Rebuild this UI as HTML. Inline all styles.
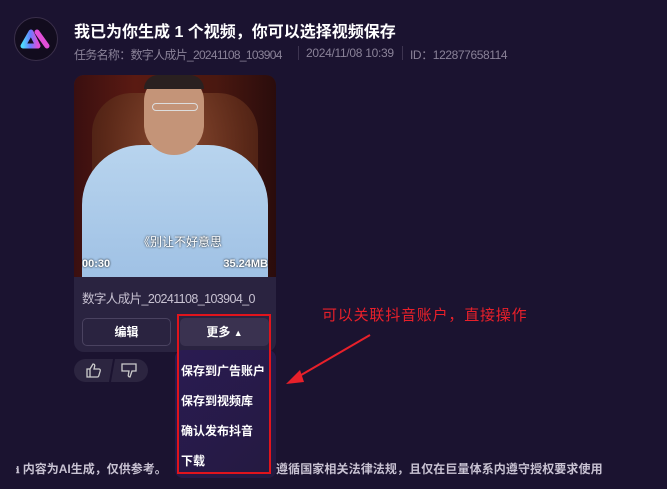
<!DOCTYPE html>
<html><head><meta charset="utf-8"><style>
*{margin:0;padding:0;box-sizing:border-box}
body{width:667px;height:489px;background:#1b1330;font-family:"Liberation Sans","Noto Sans CJK SC",sans-serif;position:relative;overflow:hidden;color:#fff}
.a{position:absolute}
</style></head><body>
<div class="a" style="left:14px;top:17px;width:44px;height:44px;border-radius:50%;background:#120c1e;border:1px solid #3a2f4a"></div>
<svg class="a" style="left:20px;top:26px" width="34" height="26" viewBox="0 0 34 26">
<defs><linearGradient id="g" x1="0" x2="1"><stop offset="0" stop-color="#4fd8ff"/><stop offset="0.5" stop-color="#6a7bff"/><stop offset="1" stop-color="#e14fd8"/></linearGradient></defs>
<path d="M3 20 L11 6 L18 20 Z" fill="none" stroke="url(#g)" stroke-width="5" stroke-linejoin="round"/>
<path d="M17 6 L27 20" stroke="#e14fd8" stroke-width="5" stroke-linecap="round"/>
</svg>
<div class="a" style="left:74px;top:18px;font-size:16px;font-weight:bold;white-space:nowrap">我已为你生成 1 个视频，你可以选择视频保存</div>
<div class="a" style="left:74px;top:46px;font-size:12px;color:#8a8298;white-space:nowrap;letter-spacing:-0.7px">任务名称：数字人成片_20241108_103904</div>
<div class="a" style="left:298px;top:46px;width:1px;height:14px;background:#3d3450"></div>
<div class="a" style="left:306px;top:46px;font-size:12px;color:#8a8298;white-space:nowrap;letter-spacing:-0.3px">2024/11/08 10:39</div>
<div class="a" style="left:402px;top:46px;width:1px;height:14px;background:#3d3450"></div>
<div class="a" style="left:410px;top:46px;font-size:12px;color:#8a8298;white-space:nowrap;letter-spacing:-0.4px">ID：122877658114</div>

<div class="a" style="left:74px;top:75px;width:202px;height:277px;border-radius:10px;background:#2a2340;overflow:hidden">
 <div class="a" style="left:0;top:0;width:202px;height:202px;background:linear-gradient(90deg,#3a0f10,#5a1a12 30%,#4a1810 70%,#2a0c0c);overflow:hidden">
  <div class="a" style="left:18px;top:18px;width:166px;height:170px;border-radius:40px 40px 10px 10px;background:radial-gradient(ellipse at 50% 30%,#8a4a30,#5a2818 60%,#3a1810)"></div>
  <div class="a" style="left:8px;top:70px;width:186px;height:140px;border-radius:60px 60px 0 0;background:linear-gradient(180deg,#b8d4ee,#9ec0e4)"></div>
  <div class="a" style="left:70px;top:0;width:60px;height:80px;border-radius:26px 26px 30px 30px;background:#c49478"></div>
  <div class="a" style="left:70px;top:0;width:60px;height:14px;border-radius:20px 20px 0 0;background:#2a2020"></div>
  <div class="a" style="left:78px;top:28px;width:46px;height:8px;border:1px solid #ddd;border-radius:4px"></div>
  <div class="a" style="left:64px;top:158px;font-size:12px;color:#fff;text-shadow:0 0 2px #000;white-space:nowrap">《别让不好意思</div>
  <div class="a" style="left:8px;top:183px;font-size:11px;font-weight:bold;text-shadow:0 0 2px #000">00:30</div>
  <div class="a" style="right:8px;top:183px;font-size:11px;font-weight:bold;text-shadow:0 0 2px #000">35.24MB</div>
 </div>
 <div class="a" style="left:8px;top:213px;font-size:12.5px;color:#c8c2d2;white-space:nowrap;letter-spacing:-0.6px">数字人成片_20241108_103904_0</div>
 <div class="a" style="left:8px;top:243px;width:89px;height:28px;border:1px solid #4a4260;border-radius:5px;text-align:center;line-height:26px;font-size:12px;font-weight:bold">编辑</div>
 <div class="a" style="left:106px;top:243px;width:89px;height:28px;background:#3a3250;border-radius:5px;text-align:center;line-height:28px;font-size:12px;font-weight:bold">更多 <span style="font-size:9px">▲</span></div>
</div>
<div class="a" style="left:74px;top:359px;width:74px;height:23px;border-radius:12px;background:#2c2540"></div>
<div class="a" style="left:111px;top:359px;width:2px;height:23px;background:#1b1330;transform:skewX(-10deg)"></div>
<svg class="a" style="left:86px;top:363px" width="16" height="15" viewBox="0 0 16 15" fill="none" stroke="#ccc" stroke-width="1.3"><path d="M1 6h3v8H1z M4 6l3-5c1.5 0 2 1 1.6 2.5L8 6h5c1 0 1.5 1 1.2 2l-1.5 5c-.3.7-.8 1-1.5 1H4"/></svg>
<svg class="a" style="left:121px;top:363px" width="16" height="15" viewBox="0 0 16 15" fill="none" stroke="#ccc" stroke-width="1.3"><path d="M1 1h14v7h-4l-2 6c-1.5 0-2-1-1.6-2.5L8 8H1z"/></svg>

<div class="a" style="left:175px;top:350px;width:101px;height:128px;border-radius:8px;background:linear-gradient(135deg,#2a1b52,#241a40)"></div>
<div class="a" style="left:177px;top:314px;width:94px;height:160px;border:2px solid #e0141c"></div>
<div class="a" style="left:181px;top:362px;font-size:12px;font-weight:bold;white-space:nowrap">保存到广告账户</div>
<div class="a" style="left:181px;top:392px;font-size:12px;font-weight:bold;white-space:nowrap">保存到视频库</div>
<div class="a" style="left:181px;top:422px;font-size:12px;font-weight:bold;white-space:nowrap">确认发布抖音</div>
<div class="a" style="left:181px;top:452px;font-size:12px;font-weight:bold;white-space:nowrap">下载</div>

<div class="a" style="left:322px;top:304px;font-size:15px;color:#e8202a;white-space:nowrap;letter-spacing:0.8px">可以关联抖音账户，直接操作</div>
<svg class="a" style="left:280px;top:330px" width="100" height="60"><path d="M90 5 L16 48" stroke="#e8202a" stroke-width="2"/><path d="M6 54 L20 40 L24 52 Z" fill="#e8202a"/></svg>

<div class="a" style="left:16px;top:460px;font-size:12px;font-weight:bold;color:#c8c2d2;white-space:nowrap"><span style="font-size:9px">ℹ</span> 内容为AI生成，仅供参考。</div>
<div class="a" style="left:276px;top:460px;font-size:12px;font-weight:bold;color:#c8c2d2;white-space:nowrap;letter-spacing:0.1px">遵循国家相关法律法规，且仅在巨量体系内遵守授权要求使用</div>
</body></html>
